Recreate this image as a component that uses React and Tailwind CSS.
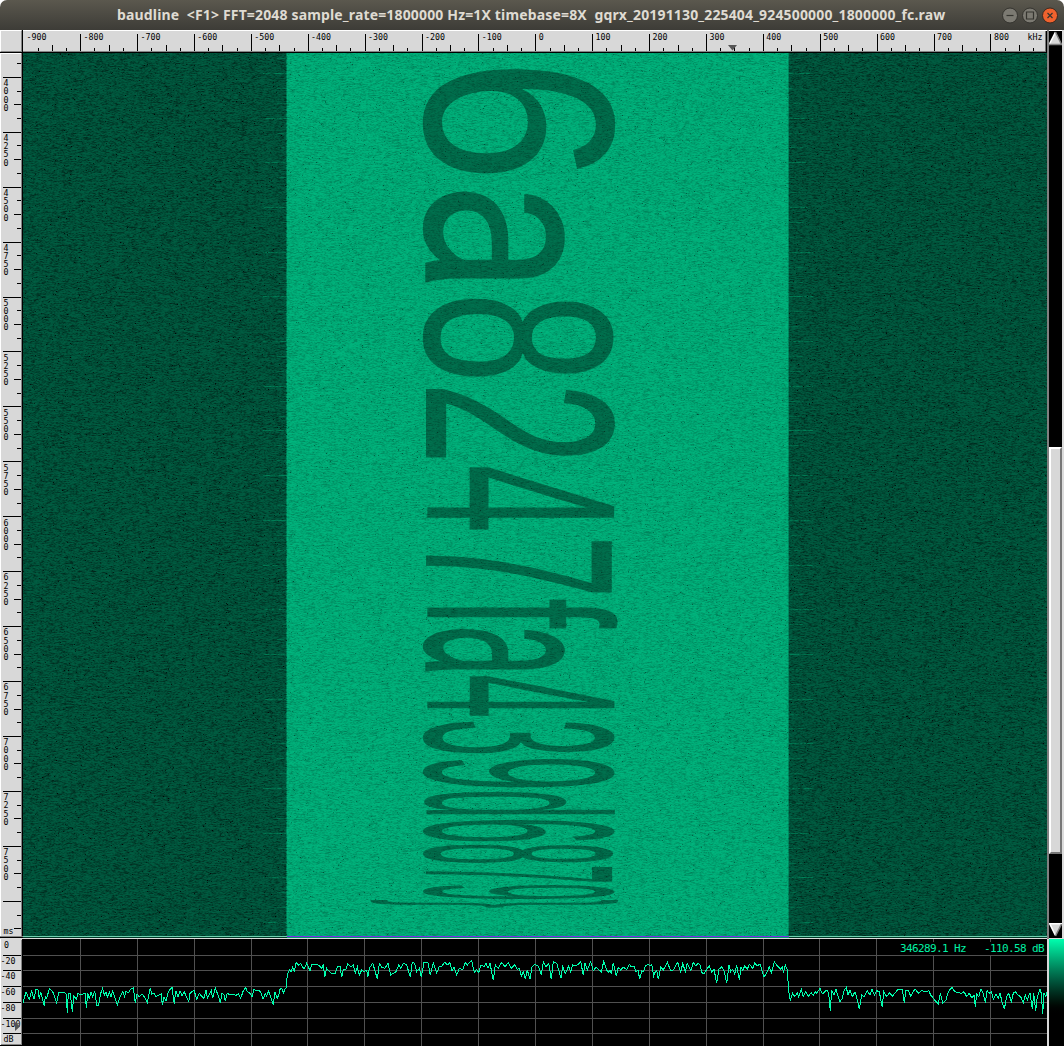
import React, { useEffect, useRef, useState } from 'react';

const MONO = '"DejaVu Sans Mono", monospace';

/* Characters carried by the waterfall: [char, x0, x1, y0, y1] */
const GLYPHS = [
  ['6', 422.7, 615.7, 69, 174],
  ['a', 422.7, 565.3, 191, 282.5],
  ['8', 422.7, 615.3, 298.3, 377],
  ['2', 426, 615.3, 389, 458],
  ['4', 426, 614.7, 467, 530],
  ['7', 426, 612.3, 541, 593],
  ['f', 426, 618, 599, 628.7],
  ['a', 422.7, 565.3, 628.7, 671.5],
  ['4', 426, 615, 676, 716],
  ['3', 422.7, 615, 721.5, 753.5],
  ['9', 422.7, 615, 759, 787.3],
  ['d', 422.7, 615, 792, 814.5],
  ['6', 422.7, 615, 820, 841.5],
  ['8', 422.7, 615, 844.5, 863],
  ['7', 426, 612.7, 867, 882],
  ['9', 422.7, 615, 885, 899],
  ['}', 370, 618, 900, 907.5],
];

/* Spectrum trace samples: [origin x, origin y, points in thirds of a pixel] */
const TRACE = [
  [0, 820, '69,550 78,515 84,530 88,538 95,512 102,538 108,508 114,510 118,538 122,515 133,558 136,530 140,535 148,506 158,515 170,548 176,516 190,516 196,520 199,522 202,580 205,520 211,520 217,575 221,528 229,538 234,520 240,525 248,522 256,520 259,565 263,520 268,538 273,516 278,530 284,514 290,555 296,555 302,520 308,505 313,525 318,515 322,532 328,516 333,530 338,512 345,535 352,555 360,530 368,515 374,530 378,512 384,520 392,508 400,503 406,548 411,522 418,530 426,522 434,532 442,548 451,503 455,522 462,520 468,530 476,525 484,522 487,555 492,530 498,542 505,515 516,502 523,553 527,512 534,530 540,512 546,528 553,516 560,532 566,545 570,520 582,510 590,538 598,520 606,530 612,535 618,510 622,535 630,520 634,512 638,535 646,504 654,525 661,548 666,520 672,525 676,543 682,520 690,525 700,522 708,526 715,522 722,535 730,512 737,503 742,515 750,520 756,532 762,508 770,513 778,512 784,520 789,538 796,520 800,528 806,512 812,530 820,555 825,515 832,535 838,520'],
  [280, 900, '0,268 5,265 10,280 15,268 18,265 22,225 28,210 33,215 38,200 43,215 48,188 56,195 62,190 72,208 80,190 90,212 96,192 105,192 115,195 125,205 130,192 134,232 140,205 148,215 155,220 165,222 172,200 180,198 185,232 190,208 197,210 203,192 212,200 220,195 226,220 232,200 238,225 245,210 252,215 260,210 263,232 268,205 278,190 285,212 292,238 298,190 305,202 315,205 324,190 332,225 340,220 348,215 356,195 362,205 370,190 380,195 391,232 397,187 404,190 410,215 418,205 424,230 432,187 444,188 451,225 460,190 470,218 478,200 486,198 494,187 502,195 510,188 516,212 522,200 530,225 538,205 548,210 556,188 562,195 568,188 575,182 583,218 590,208 596,218 603,195 612,200 618,190 624,205 630,190 634,210 640,240 646,195 655,205 665,187 675,200 685,188 694,205 704,195 712,208 718,205 724,228 730,215 736,238 742,210 750,238 756,200 766,193 776,200 784,225 790,185 798,200 806,190 814,238 820,185 830,190 843,235 848,200 856,220 866,198 872,215 878,195 888,198 898,190'],
  [560, 930, '62,95 70,135 75,100 82,120 92,95 100,122 108,112 115,118 124,125 131,95 140,120 145,128 150,120 154,132 160,98 169,138 175,112 182,120 190,112 200,118 208,103 214,110 222,108 228,125 234,120 239,148 245,122 250,125 256,108 264,103 270,108 275,103 281,138 286,125 290,122 295,148 302,112 310,120 322,97 332,122 340,120 353,97 362,128 368,100 376,125 382,100 392,122 400,98 408,108 414,100 420,105 426,128 432,132 440,118 448,108 455,125 462,118 470,160 477,118 486,110 493,125 500,160 507,105 512,125 518,118 524,132 530,105 538,150 543,112 548,122 554,108 562,118 568,103 578,115 584,100 592,108 600,102 612,142 620,128 628,110 634,130 643,95 652,108 662,118 668,110 670,128 676,104 682,120 686,185'],
  [780, 820, '31,540 38,520 44,530 52,518 56,530 64,508 70,530 77,515 85,530 93,518 100,525 106,515 110,520 120,505 127,522 134,515 140,510 146,520 151,572 155,510 162,525 168,508 175,530 180,545 187,535 192,512 199,502 204,525 210,510 217,530 225,515 232,540 238,568 245,525 252,530 262,512 270,525 276,508 283,525 290,512 298,515 307,562 311,515 320,530 328,518 338,528 346,518 354,508 367,508 373,550 377,512 384,510 392,528 405,507 415,520 425,512 436,515 446,512 452,525 460,535 468,545 475,552 481,520 488,550 498,540 505,515 516,502 524,515 534,518 545,520 552,515 560,530 568,520 576,535 582,525 586,560 590,522 596,530 603,506 610,520 616,548 621,512 628,520 634,515 640,538 648,522 655,535 660,520 666,545 673,568 680,530 686,520 694,545 700,520 706,515 714,525 722,530 730,548 736,525 742,540 750,518 757,568 761,520 767,573 772,530 780,508 784,520 788,583 792,520 797,530 801,515'],
];

const tracePoints = TRACE.map(([ox, oy, pts]) =>
  pts
    .split(' ')
    .map((p) => {
      const [x, y] = p.split(',').map(Number);
      return `${(ox + x / 3 - 23).toFixed(1)},${(oy + y / 3 - 939).toFixed(1)}`;
    })
    .join(' ')
).join(' ');

const GRID_X = [80, 137, 194, 251, 307, 364, 421, 478, 535, 592, 649, 706, 763, 819, 876, 933, 990];
const GRID_Y = [955, 970, 986, 1002, 1018, 1033];

function random(seed) {
  let s = seed;
  return () => {
    s = (s + 0x6d2b79f5) | 0;
    let t = Math.imul(s ^ (s >>> 15), 1 | s);
    t = (t + Math.imul(t ^ (t >>> 7), 61 | t)) ^ t;
    return ((t ^ (t >>> 14)) >>> 0) / 4294967296;
  };
}

const fontOf = (ch) => (ch === 'a' ? 'Roboto' : 'Liberation Sans');

/* Places a rotated character so that its ink fills the given box */
function fitGlyph([ch, x0, x1, y0, y1], ctx) {
  ctx.font = `200px "${fontOf(ch)}"`;
  const m = ctx.measureText(ch);
  const left = -m.actualBoundingBoxLeft;
  const right = m.actualBoundingBoxRight;
  const up = m.actualBoundingBoxAscent;
  const down = m.actualBoundingBoxDescent;
  const sx = (y1 - y0) / (right - left);
  const sy = (x1 - x0) / (up + down);
  return `matrix(0 ${sx} ${-sy} 0 ${x0 - 23 + sy * down} ${y0 - 53 - sx * left})`;
}

function Waterfall() {
  const noise = useRef(null);
  const [transforms, setTransforms] = useState([]);

  useEffect(() => {
    const c = document.createElement('canvas').getContext('2d');
    setTransforms(GLYPHS.map((g) => fitGlyph(g, c)));

    const W = 1024;
    const H = 883;
    const ctx = noise.current.getContext('2d');
    const img = ctx.createImageData(W, H);
    const rnd = random(7);
    for (let y = 0; y < H; y++) {
      let prev = rnd();
      let held = rnd();
      for (let x = 0; x < W; x++) {
        const u = rnd();
        const mix = u * 0.42 + prev * 0.38 + held * 0.2;
        if (x % 2) held = prev;
        prev = u;
        const bright = x >= 264 && x < 766;
        let d = Math.pow(mix, 1.9) * (bright ? 0.31 : 0.62);
        const spike = rnd();
        if (spike < 0.012) d += (bright ? 0.22 : 0.38) * rnd();
        if (spike > 0.996) d += bright ? 0.3 : 0.55;
        img.data[(y * W + x) * 4 + 3] = Math.min(235, d * 255);
      }
    }
    ctx.putImageData(img, 0, 0);
  }, []);

  const streaks = [];
  for (let y = 5; y < 880; y += 14.9) streaks.push(Math.round(y));

  return (
    <div className="relative h-[883px] w-[1024px] overflow-hidden bg-[#005f43]">
      <svg className="block" width="1024" height="883">
        {streaks.map((y, i) => (
          <g key={y} fill="#008c60" opacity={i % 3 === 1 ? 0.8 : 0.5}>
            <rect x={i % 3 === 1 ? 240 : 254} y={y} width={24} height="1" />
            <rect x="766" y={y} width={i % 3 === 1 ? 24 : 14} height="1" />
          </g>
        ))}
        <rect x="263" y="0" width="503" height="883" fill="#009065" />
        <rect x="264" y="0" width="501" height="883" fill="#00b67e" />
        <g fill="#00724f" fontSize="200">
          {transforms.map((t, i) => (
            <text key={i} transform={t} fontFamily={`"${fontOf(GLYPHS[i][0])}", sans-serif`}>{GLYPHS[i][0]}</text>
          ))}
        </g>
      </svg>
      <canvas ref={noise} width="1024" height="883" className="absolute inset-0" />
    </div>
  );
}

function FrequencyRuler() {
  const ticks = [];
  for (let i = 0; i <= 71; i++) {
    const x = Math.round(23.3 + i * 14.222 - 23);
    if (i > 0 && x < 1022) ticks.push([x, i % 4 === 0 ? 4 : i % 2 === 0 ? 15 : 18]);
  }
  return (
    <svg className="block" width="1024" height="23">
      <rect width="1024" height="23" fill="#d8d8d8" />
      <rect width="1024" height="1" fill="#fff" />
      <g fill="#000" shapeRendering="crispEdges">
        {ticks.map(([x, y]) => (
          <rect key={x} x={x} y={y} width="1" height={21 - y} />
        ))}
      </g>
      <g fontFamily={MONO} fontSize="8.3" fill="#000">
        {Array.from({ length: 18 }, (_, i) => (
          <text key={i} x={3.6 + i * 56.9} y="10.3">{(i - 9) * 100}</text>
        ))}
        <text x="1004.5" y="10.3">kHz</text>
      </g>
      <path d="M705 15h9l-4.500 5.500z" fill="#555" />
      <rect x="0" y="21" width="1023" height="1" fill="#858585" />
      <rect x="1022" y="1" width="1" height="21" fill="#777" />
      <rect x="1023" y="1" width="1" height="22" fill="#000" />
      <rect x="0" y="22" width="1024" height="1" fill="#000" />
    </svg>
  );
}

function TimeRuler() {
  const ticks = [];
  for (let i = -1; i < 63; i++) {
    const y = Math.round(77.3 + i * 13.733 - 53.5);
    ticks.push([y, i % 4 === 0 ? 3 : Math.abs(i % 2) === 0 ? 14 : 17]);
  }
  return (
    <svg className="block" width="23" height="883">
      <rect width="23" height="883" fill="#d8d8d8" />
      <rect width="23" height="1" fill="#fff" />
      <rect width="1" height="883" fill="#fff" />
      <g fill="#000" shapeRendering="crispEdges">
        {ticks.map(([y, x]) => (
          <rect key={y} x={x} y={y} width={21 - x} height="1" />
        ))}
      </g>
      <g fontFamily={MONO} fontSize="8.3" fill="#000">
        {Array.from({ length: 15 }, (_, i) =>
          String(4000 + i * 250)
            .split('')
            .map((d, j) => (
              <text key={`${i}-${j}`} x="3.400" y={33.1 + i * 54.93 + j * 8.2}>{d}</text>
            ))
        )}
        <text x="3.5" y="881">ms</text>
      </g>
      <rect x="21" width="1" height="883" fill="#858585" />
      <rect x="22" width="1" height="883" fill="#000" />
    </svg>
  );
}

function LevelRuler() {
  const labels = [['0', 948.3, 4], ['-20', 964, 0.5], ['-40', 979, 0.5], ['-60', 995, 0.5], ['-80', 1011, 0.5], ['-100', 1027, 0.5], ['dB', 1042, 3.5]];
  return (
    <svg className="block shrink-0" width="23" height="107">
      <rect width="23" height="107" fill="#000" />
      <rect width="22" height="106" fill="#d8d8d8" />
      <rect width="1" height="106" fill="#fff" />
      <rect x="1" y="105" width="21" height="1" fill="#858585" />
      <rect x="21" y="1" width="1" height="105" fill="#858585" />
      {GRID_Y.map((y) => (
        <rect key={y} x="3" y={y - 939} width="18" height="1" fill="#000" />
      ))}
      <g fontFamily={MONO} fontSize="8.3" fill="#000">
        {labels.map(([t, y, x]) => (
          <text key={t} x={x} y={y - 939}>{t}</text>
        ))}
      </g>
      <path d="M15 83l5 4.500-5 4.500z" fill="#555" />
    </svg>
  );
}

function Spectrum() {
  return (
    <div className="relative h-[107px] w-[1024px] bg-black">
      <svg className="block" width="1024" height="107">
        <g fill="#505050" shapeRendering="crispEdges">
          {GRID_Y.map((y) => (
            <rect key={y} x="0" y={y - 939} width="1024" height="1" />
          ))}
          {GRID_X.map((x) => (
            <rect key={x} x={x - 23} y="0" width="1" height="107" />
          ))}
        </g>
        <polyline points={tracePoints} fill="none" stroke="#00ffae" strokeWidth="1" shapeRendering="crispEdges" />
      </svg>
      <div className="absolute right-[3px] top-[3px] whitespace-pre bg-black pt-px font-['DejaVu_Sans_Mono'] text-[11px] leading-[12px] tracking-[-0.62px] text-[#00f0a4]">
        {'346289.1 Hz   -110.58 dB'}
      </div>
    </div>
  );
}

function Scrollbar() {
  return (
    <div className="flex h-[909px] w-[17px] flex-col border-l-2 border-r-2 border-l-[#808080] border-r-[#dcdcdc] bg-black">
      <svg className="block shrink-0" width="13" height="16">
        <rect width="13" height="1" fill="#fff" />
        <path d="M6.500 2L13 15H0z" fill="#d8d8d8" />
        <path d="M6.500 2L0 15" stroke="#fff" strokeWidth="1.500" />
        <path d="M6.500 2L12.500 14.500H0" stroke="#808080" fill="none" strokeWidth="1.500" />
      </svg>
      <div className="mt-[401px] h-[407px] shrink-0 border-2 border-b-[#777] border-l-white border-r-[#777] border-t-white bg-[#d8d8d8]" />
      <div className="grow" />
      <svg className="block shrink-0" width="13" height="16">
        <path d="M0 0H13L6.500 13z" fill="#d8d8d8" />
        <path d="M13 .7H.7L6.500 12.500" stroke="#fff" fill="none" strokeWidth="1.500" />
        <path d="M12.500 1L6.500 13" stroke="#808080" strokeWidth="1.500" />
        <rect y="15" width="13" height="1" fill="#dcdcdc" />
      </svg>
    </div>
  );
}

function WindowButton({ close, children }) {
  return (
    <svg width="16" height="17" viewBox="0 0 16 17" className="block">
      <circle cx="8" cy="8.500" r="7.500" fill={close ? '#f0622e' : '#7c7a72'} stroke={close ? '#3a2a20' : '#34332e'} strokeWidth="1" />
      <g fill="none" stroke="#35342f" strokeWidth="1.200">{children}</g>
    </svg>
  );
}

export default function App() {
  return (
    <div className="flex h-[1046px] w-[1064px] flex-col overflow-hidden bg-white">
      <header className="flex h-[30px] items-center rounded-t-[7px] bg-linear-to-b from-[#5b584e] to-[#3d3c37]">
        <h1 className="ml-[117px] w-[830px] shrink-0 whitespace-pre font-['Noto_Sans'] text-[14px] font-bold leading-[30px] tracking-[0.155px] text-[#dfdbd2]">
          {'baudline  <F1> FFT=2048 sample_rate=1800000 Hz=1X timebase=8X  gqrx_20191130_225404_924500000_1800000_fc.raw'}
        </h1>
        <div className="ml-auto mr-[6px] flex gap-1">
          <WindowButton><path d="M4.500 8.500h7" /></WindowButton>
          <WindowButton><path d="M4.500 5h7v7h-7z" /></WindowButton>
          <WindowButton close><path d="M5.500 6l5 5m0-5l-5 5" /></WindowButton>
        </div>
      </header>
      <main className="flex h-[909px]">
        <div className="flex w-[1047px] flex-col">
          <div className="flex">
            <div className="h-[23px] w-[23px] border-b border-r border-black">
              <div className="h-[22px] w-[22px] border border-b-[#858585] border-l-white border-r-[#858585] border-t-white bg-[#d8d8d8]" />
            </div>
            <FrequencyRuler />
          </div>
          <div className="flex">
            <TimeRuler />
            <Waterfall />
          </div>
          <div className="flex h-px">
            <div className="w-[23px] bg-[#858585]" />
            <div className="w-[264px] bg-[#6fcfae]" />
            <div className="w-[502px] bg-[#7a2ce8]" />
            <div className="grow bg-[#6fcfae]" />
          </div>
          <div className="flex h-px">
            <div className="w-[23px] bg-black" />
            <div className="w-[264px] bg-[#003827]" />
            <div className="w-[502px] bg-[#009a6c]" />
            <div className="grow bg-[#003827]" />
          </div>
          <div className="h-px bg-[#dcdcdc]" />
        </div>
        <Scrollbar />
      </main>
      <footer className="flex h-[107px] bg-black">
        <LevelRuler />
        <Spectrum />
        <div className="w-[17px] border-l-2 border-[#d8d8d8] bg-linear-to-b from-[#00ffae] via-[#00533a] via-40% to-black to-72%" />
      </footer>
    </div>
  );
}
